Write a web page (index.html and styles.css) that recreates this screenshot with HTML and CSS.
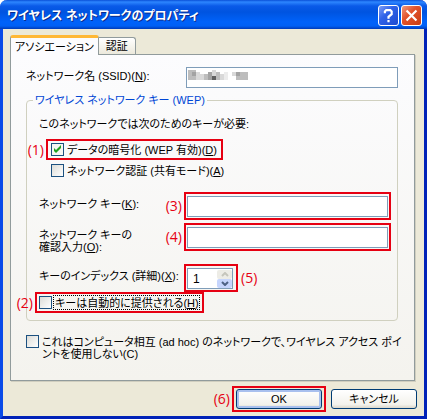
FILE: index.html
```
<!DOCTYPE html>
<html lang="ja">
<head>
    <meta charset="UTF-8">
    <meta name="viewport" content="width=device-width, initial-scale=1.0">
    <title>ワイヤレス ネットワークのプロパティ</title>
    <link rel="stylesheet" href="styles.css">
</head>
<body>

    <form class="dialog">
        <header class="titlebar">
            <h1>ワイヤレス ネットワークのプロパティ</h1>
            <button type="button" class="title-btn" aria-label="ヘルプ">
                <svg viewBox="0 0 21 21"><path d="M6.500 8V6L8 4.500H12.500L14 6V9L10.500 12V14M10.500 15.500V18"/></svg>
            </button>
            <button type="button" class="title-btn close" aria-label="閉じる">
                <svg viewBox="0 0 21 21"><path d="M5 5L16 16M16 5L5 16"/></svg>
            </button>
        </header>

        <div class="content">
            <nav class="tabs">
                <button type="button" class="tab active">アソシエーション</button>
                <button type="button" class="tab">認証</button>
            </nav>

            <main class="panel">
                <div class="row ssid-row">
                    <label for="ssid">ネットワーク名 (SSID)(<u>N</u>):</label>
                    <div class="ssid">
                        <input type="text" id="ssid">
                        <svg class="mosaic" viewBox="0 0 60 10" shape-rendering="crispEdges">
                            <path fill="#bdbdbd" d="M0 0h8v10H0zM16 4h4v6h-4zM28 2h4v8h-4zM48 2h12v8H48z"/>
                            <path fill="#a3a3a3" d="M4 2h4v4H4zM20 2h4v8h-4zM48 2h4v4h-4z"/>
                            <path fill="#d9d9d9" d="M8 2h4v8H8zM12 4h4v6h-4zM24 0h4v6h-4zM32 4h4v6h-4zM44 2h4v4h-4z"/>
                            <path fill="#ececec" d="M36 2h4v8h-4z"/>
                            <path fill="#606060" d="M24 6h4v4h-4z"/>
                        </svg>
                    </div>
                </div>

                <fieldset class="wep">
                    <legend>ワイヤレス ネットワーク キー (WEP)</legend>
                    <p>このネットワークでは次のためのキーが必要:</p>

                    <div class="mark mark-wep">
                        <span class="no">(1)</span>
                        <label class="check"><input type="checkbox" checked><span>データの暗号化 (WEP 有効)(<u>D</u>)</span></label>
                    </div>
                    <label class="check auth"><input type="checkbox"><span>ネットワーク認証 (共有モード)(<u>A</u>)</span></label>

                    <div class="row key-row">
                        <label for="key">ネットワーク キー(<u>K</u>):</label>
                        <div class="mark field">
                            <span class="no">(3)</span>
                            <input type="password" id="key">
                        </div>
                    </div>
                    <div class="row confirm-row">
                        <label for="confirm">ネットワーク キーの<br>確認入力(<u>O</u>):</label>
                        <div class="mark field">
                            <span class="no">(4)</span>
                            <input type="password" id="confirm">
                        </div>
                    </div>
                    <div class="row index-row">
                        <label for="index">キーのインデックス (詳細)(<u>X</u>):</label>
                        <div class="mark field spin">
                            <input type="text" id="index" value="1">
                            <div class="spin-btns">
                                <button type="button" class="up" aria-label="上へ"><svg viewBox="0 0 8 5"><path d="M1 4L4 1L7 4"/></svg></button>
                                <button type="button" class="down" aria-label="下へ"><svg viewBox="0 0 8 5"><path d="M1 1L4 4L7 1"/></svg></button>
                            </div>
                            <span class="no after">(5)</span>
                        </div>
                    </div>

                    <div class="mark mark-auto">
                        <span class="no">(2)</span>
                        <label class="check focus"><input type="checkbox"><span>キーは自動的に提供される(<u>H</u>)</span></label>
                    </div>
                </fieldset>

                <label class="check adhoc"><input type="checkbox"><span>これはコンピュータ相互 (ad hoc) のネットワークで、ワイヤレス アクセス ポイ<br>ントを使用しない(C)</span></label>
            </main>

            <footer class="buttons">
                <div class="mark mark-ok">
                    <span class="no">(6)</span>
                    <button type="submit" class="btn default">OK</button>
                </div>
                <button type="button" class="btn">キャンセル</button>
            </footer>
        </div>
    </form>

</body>
</html>
```
FILE: styles.css
```
* {
    box-sizing: border-box;
}
body {
    margin: 0;
    padding-right: 2px;
    background: #fff;
    color: #000;
    font: 11px/12px "Liberation Sans", "Noto Sans CJK JP", sans-serif;
    font-feature-settings: "palt";
}
button, input {
    margin: 0;
    font: inherit;
    font-feature-settings: inherit;
    color: inherit;
}
p {
    margin: 0;
}

/* window frame */
.dialog {
    background: #ece9d8;
    border: 3px solid #0a4be8;
    border-top: 0;
    border-right-color: #0022b8;
    border-bottom-color: #0022b8;
    border-radius: 7px 7px 0 0;
}
.titlebar {
    display: flex;
    align-items: center;
    gap: 2px;
    height: 29px;
    margin: 0 -3px;
    padding: 2px 5px 0 7px;
    border-radius: 7px 7px 0 0;
    background: linear-gradient(#0a50d8, #2d86ff 2px, #0a5ae8 6px, #0054e0 12px, #0062fa 22px, #0060f5 26px, #003ab8);
}
.titlebar h1 {
    flex: 1;
    margin: 0;
    font-size: 12px;
    line-height: 16px;
    font-weight: bold;
    color: #fff;
    text-shadow: 1px 1px #0b2b8c;
    white-space: nowrap;
}
.title-btn {
    width: 21px;
    height: 21px;
    padding: 0;
    border: 1px solid #fff;
    border-radius: 3px;
    background: linear-gradient(135deg, #7d9df5, #2f62e8 40%, #1c4bd0);
}
.title-btn.close {
    background: linear-gradient(135deg, #f09a80, #e2532c 40%, #c93c12);
}
.title-btn svg {
    display: block;
    width: 19px;
    height: 19px;
    fill: none;
    stroke: #fff;
    stroke-width: 2.4;
}

/* tabs */
.content {
    padding: 6px 7px 4px;
}
.tabs {
    display: flex;
    align-items: flex-end;
}
.tab {
    height: 17px;
    padding: 0 7px;
    border: 1px solid #919b9c;
    border-left: 0;
    border-bottom: 0;
    border-radius: 0 3px 0 0;
    background: linear-gradient(#fff, #ece9dc);
    line-height: 16px;
}
.tab.active {
    position: relative;
    height: 20px;
    margin-bottom: -1px;
    padding: 0 4px;
    border-left: 1px solid #919b9c;
    border-top: 3px solid #ffb836;
    border-radius: 3px 3px 0 0;
    background: #fcfcfe;
}
.panel {
    margin-right: 2px;
    padding: 12px 16px 20px 15px;
    border: 1px solid #919b9c;
    background: linear-gradient(#fcfcfe, #f4f3ee);
    box-shadow: 1px 1px #d0cebf;
}
.row {
    display: flex;
}
.row > label {
    flex: none;
}
input[type="text"], input[type="password"] {
    display: block;
    width: 100%;
    height: 21px;
    padding: 0 5px;
    border: 1px solid #7f9db9;
    border-radius: 0;
    background: #fff;
    font-size: 12px;
    outline: none;
}
.ssid-row > label {
    width: 160px;
    padding-top: 3px;
}
.ssid {
    position: relative;
    flex: 1;
}
.mosaic {
    position: absolute;
    left: 2px;
    top: 3px;
    width: 60px;
    height: 10px;
}

/* key settings */
.wep {
    min-width: 0;
    margin: 6px 0 0;
    padding: 12px 6px 7px 8px;
    border: 1px solid #d0d0bf;
    border-radius: 4px;
}
.wep legend {
    margin-left: -2px;
    padding: 0 2px;
    color: #0046d5;
}
.wep p, .wep .row > label {
    padding-left: 4px;
}
.mark {
    position: relative;
    border: 2px solid #e60012;
}
.no {
    position: absolute;
    right: 100%;
    top: 50%;
    margin-right: 4px;
    transform: translateY(-50%);
    color: #e60012;
    font: 14px/14px "Open Sans", sans-serif;
}
.no.after {
    right: auto;
    left: 100%;
    margin-left: 5px;
}
.check {
    display: flex;
    align-items: flex-start;
    gap: 2px;
}
.check span {
    padding: 1px 0 0 1px;
}
.check input {
    appearance: none;
    flex: none;
    width: 13px;
    height: 13px;
    border: 1px solid #1c5180;
    background: linear-gradient(135deg, #dcdcd7, #fff);
}
.check input:checked {
    background: url("data:image/svg+xml,%3Csvg xmlns='http://www.w3.org/2000/svg' viewBox='0 0 11 11'%3E%3Cpath d='M2 4v3l2 2 5-5V1L4 6z' fill='%2321a121'/%3E%3C/svg%3E") #f6f6f3;
}
.mark-wep {
    width: fit-content;
    margin: 9px 0 0 11px;
    padding: 2px 4px 2px 3px;
}
.auth {
    margin: 4px 0 0 16px;
}
.field {
    flex: 1;
    padding: 2px 1px 1px;
}
.key-row {
    margin-top: 15px;
}
.wep .row > label {
    width: 149px;
}
.key-row > label, .confirm-row > label, .index-row > label {
    padding-top: 6px;
}
.confirm-row {
    height: 28px;
    margin-top: 3px;
}
.index-row {
    margin-top: 13px;
}
.spin {
    flex: none;
    display: flex;
    width: 54px;
    padding-right: 3px;
}
.spin-btns {
    position: absolute;
    right: 4px;
    top: 4px;
    width: 15px;
}
.spin-btns button {
    display: flex;
    align-items: center;
    justify-content: center;
    width: 100%;
    height: 9px;
    padding: 0;
    border: 0;
    border-radius: 2px;
    background: #c6d5fd;
}
.spin-btns .up {
    background: #edece6;
}
.spin-btns svg {
    width: 8px;
    height: 5px;
    fill: none;
    stroke: #4d6185;
    stroke-width: 2;
}
.spin-btns .up svg {
    stroke: #c5c5bc;
}
.mark-auto {
    width: fit-content;
    padding: 2px 3px 2px 2px;
}
.focus span {
    outline: 1px dotted #000;
}
.adhoc {
    margin-top: 14px;
    white-space: nowrap;
}

/* buttons */
.buttons {
    display: flex;
    justify-content: flex-end;
    align-items: center;
    gap: 5px;
    margin-top: 5px;
}
.mark-ok {
    padding: 1px 2px;
}
.btn {
    display: block;
    width: 86px;
    height: 20px;
    padding: 0;
    border: 1px solid #003c74;
    border-radius: 3px;
    background: linear-gradient(#fff, #f3f2ec 80%, #dcd7cb);
}
.btn.default {
    box-shadow: inset 0 0 0 2px #a9c0ee;
}
```
